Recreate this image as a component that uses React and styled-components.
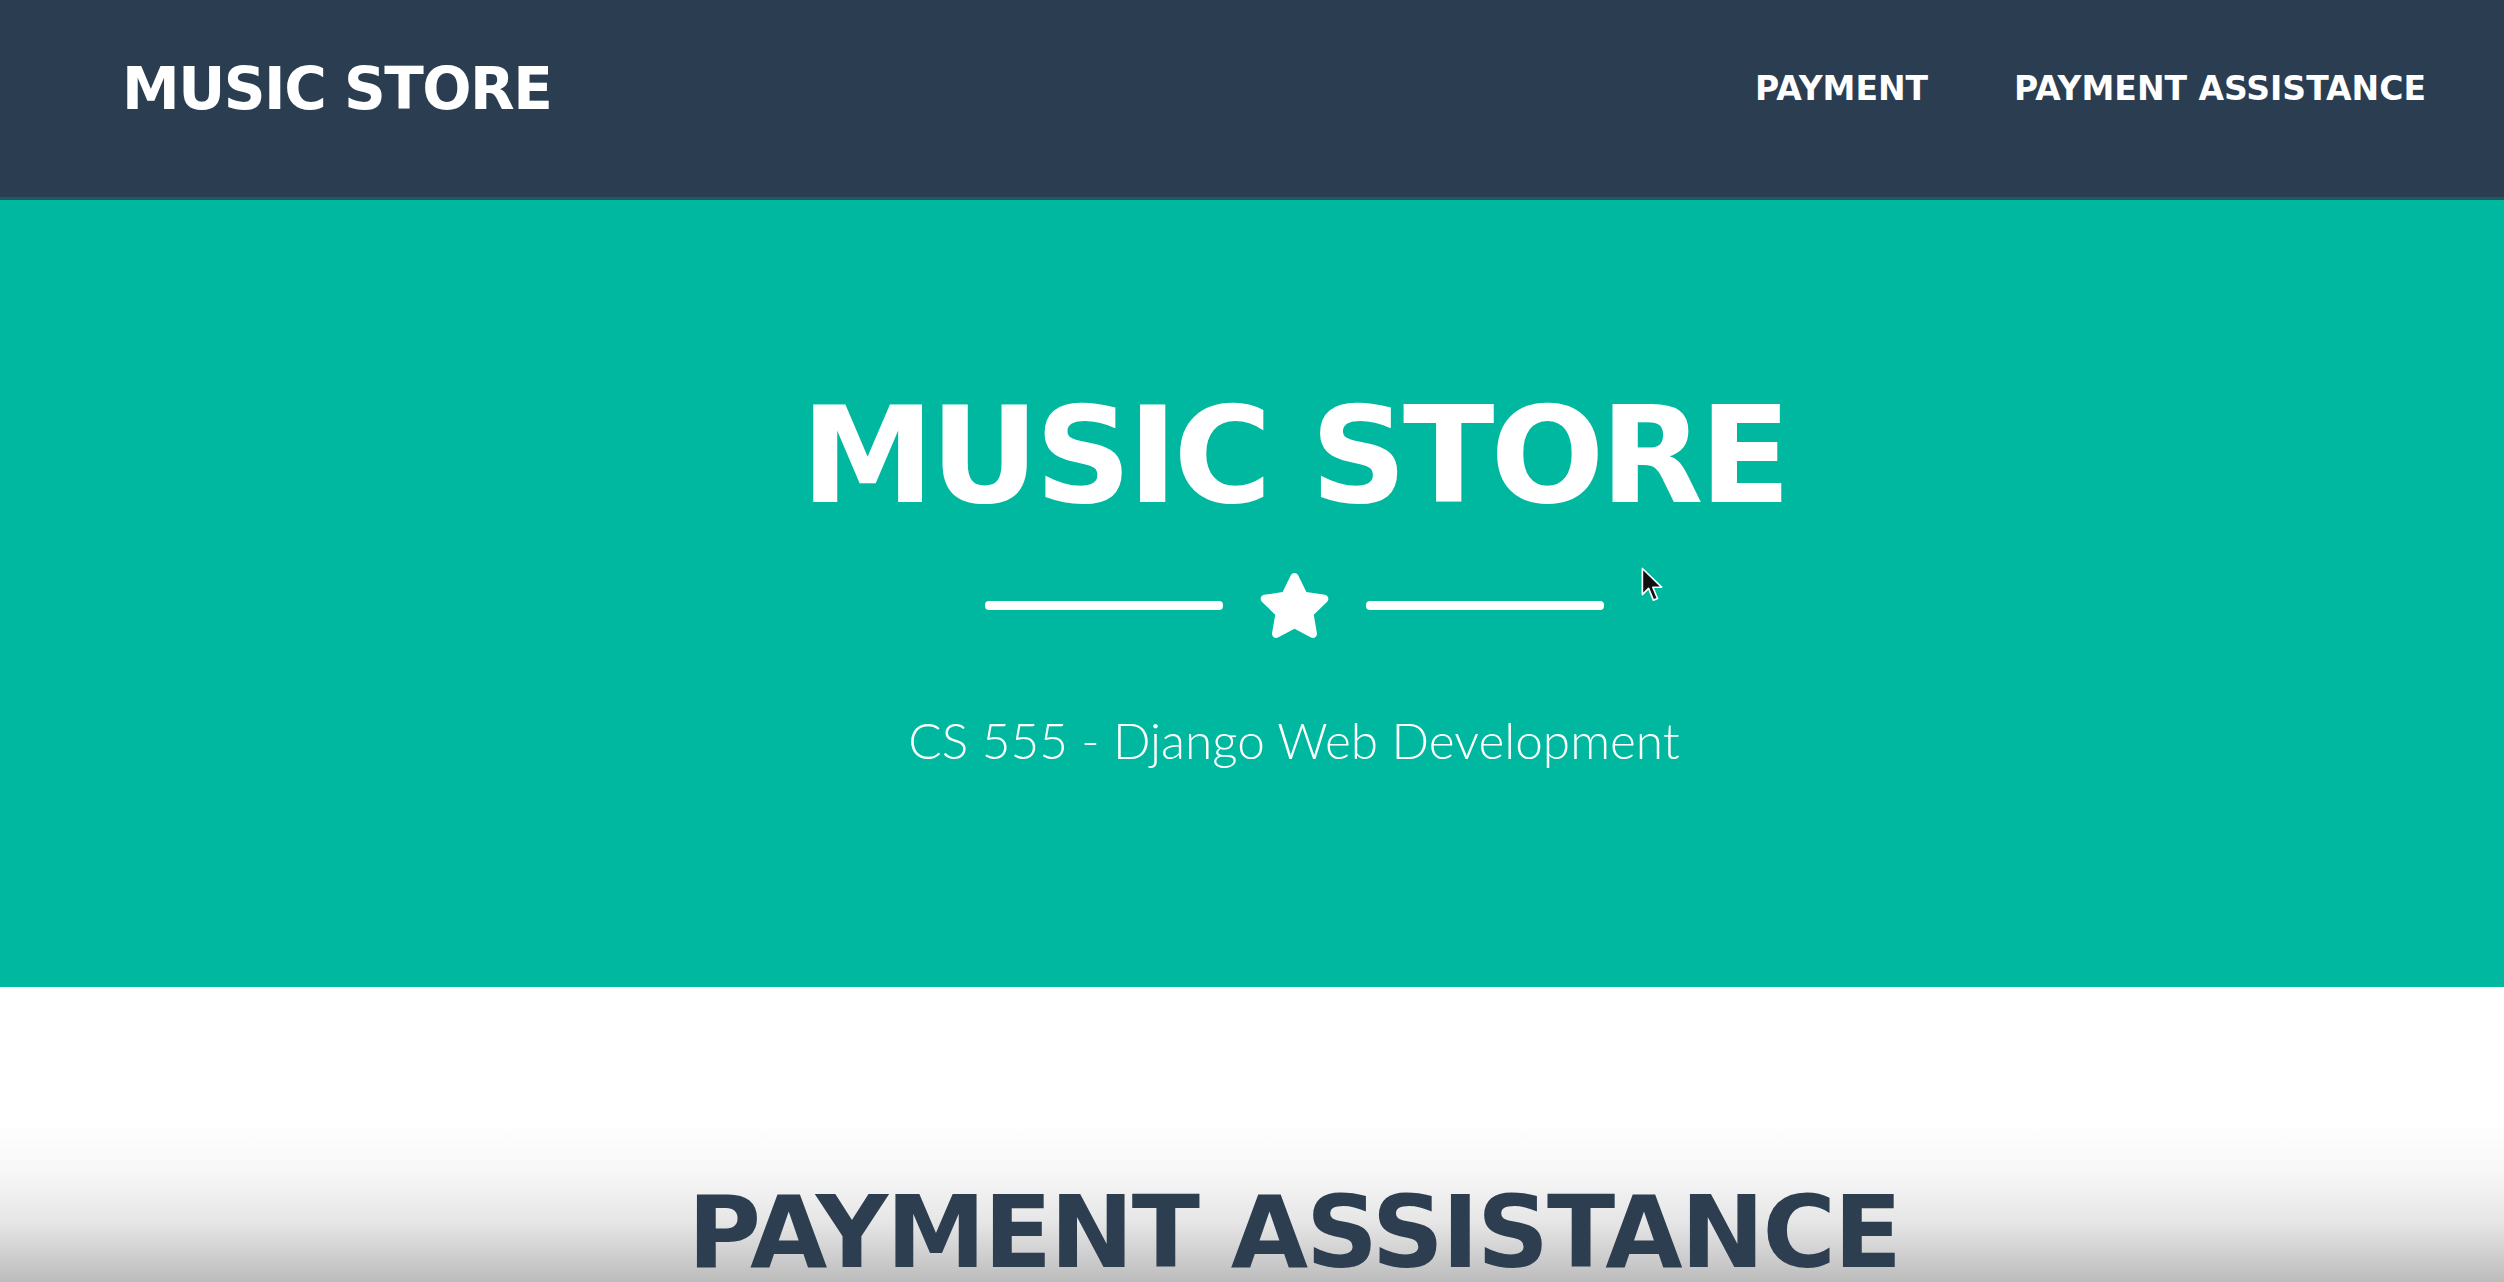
import styled, { createGlobalStyle } from "styled-components";

const navLinks = ["Payment", "Payment Assistance"];

const GlobalStyle = createGlobalStyle`
  html, body {
    margin: 0;
    padding: 0;
    background: #fff;
    font-family: "DejaVu Sans", "Liberation Sans", sans-serif;
  }
  * {
    box-sizing: border-box;
  }
`;

const Star = () => (
  <StarIcon viewBox="0 0 576 512" aria-hidden="true">
    <path d="M259.3 17.8L194 150.2 47.9 171.5c-26.2 3.8-36.7 36.1-17.7 54.6l105.7 103-25 145.5c-4.5 26.3 23.2 46 46.4 33.7L288 439.6l130.7 68.7c23.2 12.2 50.9-7.4 46.4-33.7l-25-145.5 105.7-103c19-18.5 8.5-50.8-17.7-54.6L382 150.2 316.7 17.8c-11.7-23.6-45.6-23.9-57.4 0z" />
  </StarIcon>
);

const Cursor = () => (
  <CursorIcon viewBox="0 0 16 26" aria-hidden="true">
    <path
      d="M1 1 L1 20 L5.5 15.5 L9 24 L12 22.8 L8.6 14.6 L15 14.6 Z"
      fill="#111"
      stroke="#fff"
      strokeWidth="1.2"
      strokeLinejoin="round"
    />
  </CursorIcon>
);

const App = () => (
  <>
    <GlobalStyle />
    <Navbar>
      <Brand>Music Store</Brand>
      <NavList>
        {navLinks.map((each) => (
          <NavItem key={each}>{each}</NavItem>
        ))}
      </NavList>
    </Navbar>

    <Masthead>
      <MastheadTitle>Music Store</MastheadTitle>
      <Divider>
        <DividerLine />
        <Star />
        <DividerLine />
      </Divider>
      <MastheadSubtitle>CS 555 - Django Web Development</MastheadSubtitle>
      <Cursor />
    </Masthead>

    <Section>
      <SectionHeading>Payment Assistance</SectionHeading>
    </Section>
  </>
);

export default App;

// Styled Components
const Navbar = styled.nav`
  display: flex;
  justify-content: space-between;
  align-items: center;
  height: 200px;
  padding: 0 78px 20px 122px;
  background-color: #2b3d51;
  border-bottom: 3px solid #1f5a5e;
`;

const Brand = styled.a`
  color: #fff;
  font-weight: 700;
  font-size: 58px;
  letter-spacing: -1.5px;
  text-transform: uppercase;
  line-height: 1;
  cursor: pointer;
`;

const NavList = styled.ul`
  display: flex;
  align-items: center;
  gap: 86px;
  margin: 0;
  padding: 0;
  list-style: none;
`;

const NavItem = styled.li`
  color: #fff;
  font-weight: 700;
  font-size: 33px;
  letter-spacing: 0;
  text-transform: uppercase;
  line-height: 1;
  cursor: pointer;
`;

/* the page content sits a little right of the window centre */
const Masthead = styled.header`
  position: relative;
  display: flex;
  flex-direction: column;
  align-items: center;
  height: 787px;
  padding: 189px 0 0 84px;
  background-color: #00b89f;
  color: #fff;
`;

const MastheadTitle = styled.h1`
  margin: 0;
  font-weight: 700;
  font-size: 134px;
  letter-spacing: -4px;
  line-height: 1;
  text-transform: uppercase;
`;

const Divider = styled.div`
  display: flex;
  align-items: center;
  gap: 35px;
  margin-top: 50px;
  height: 65px;
`;

const DividerLine = styled.span`
  display: block;
  width: 238px;
  height: 9px;
  border-radius: 4px;
  background-color: #fff;
`;

const StarIcon = styled.svg`
  width: 73px;
  height: 65px;
  fill: #fff;
`;

const MastheadSubtitle = styled.p`
  margin: 73px 0 0;
  font-family: Lato, "Open Sans", sans-serif;
  font-weight: 300;
  font-size: 49.5px;
  line-height: 1.2;
`;

const CursorIcon = styled.svg`
  position: absolute;
  left: 1641px;
  top: 367px;
  width: 22px;
  height: 36px;
`;

const Section = styled.section`
  height: 295px;
  padding: 206px 0 0 84px;
  text-align: center;
  overflow: hidden;
  background: linear-gradient(
    to bottom,
    #ffffff 0px,
    #ffffff 135px,
    #f7f7f7 185px,
    #e6e6e6 235px,
    #bcbcbc 295px
  );
`;

const SectionHeading = styled.h2`
  margin: 0;
  color: #2c3e50;
  font-weight: 700;
  font-size: 100px;
  letter-spacing: -2px;
  line-height: 0.8;
  text-transform: uppercase;
`;
